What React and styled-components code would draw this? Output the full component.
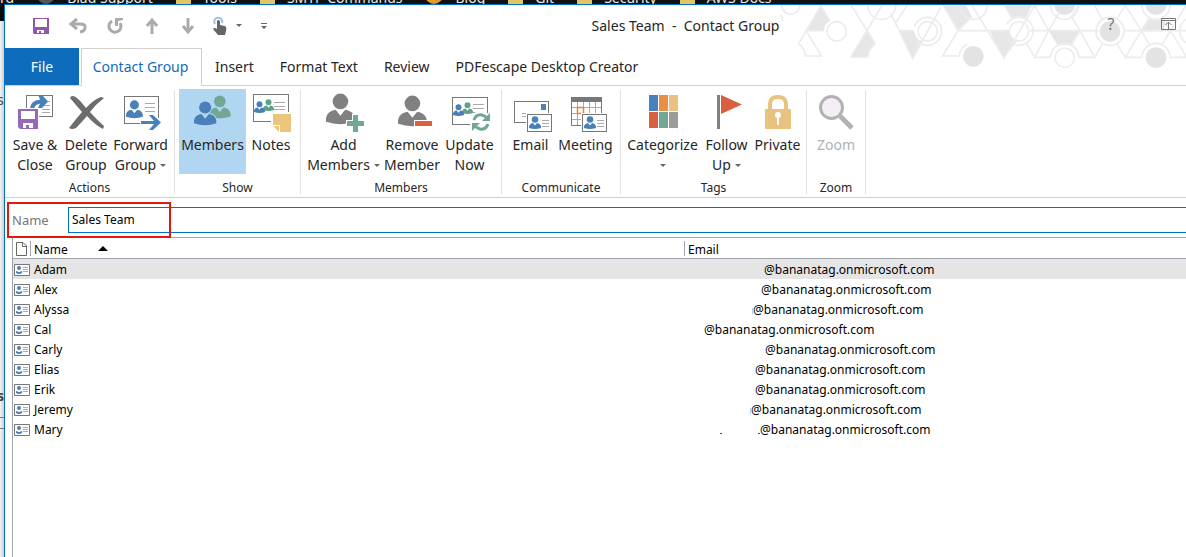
import React from "react";
import styled, { createGlobalStyle } from "styled-components";

const blue = "#4a80b9";
const green = "#72a793";
const accent = "#0f6cbd";
const grey = "#6d6d6d";

const GlobalStyle = createGlobalStyle`
  * { box-sizing: border-box; }
  body {
    margin: 0;
    background: #fff;
    color: #262626;
    font: 14px/20px "Noto Sans", "Open Sans", sans-serif;
  }
  button, input { font: inherit; color: inherit; }
  svg { display: block; overflow: visible; }
`;

const Page = styled.div`
  min-height: 100vh;
  display: flex;
  flex-direction: column;
`;

/* Browser bookmarks bar behind the window */
const Bookmarks = styled.div`
  height: 4px;
  overflow: hidden;
  display: flex;
  align-items: flex-end;
  gap: 23px;
  background: #111;
  color: #e8e8e8;
  white-space: nowrap;
`;
const Bookmark = styled.span`
  display: flex;
  align-items: flex-end;
  gap: 12px;
  line-height: 20px;
  margin-bottom: -4px;
`;
const Folder = styled.i`
  width: 15px;
  height: 14px;
  margin-bottom: 4px;
  background: #e3c566;
`;
const RoundIcon = styled.i`
  width: 18px;
  height: 18px;
  margin-bottom: 4px;
  border-radius: 9px;
  border: 4px solid ${(p) => p.$color};
  background: #222;
`;

const Desktop = styled.div`
  flex: 1;
  display: flex;
`;
const Behind = styled.div`
  width: 4px;
  overflow: hidden;
  display: flex;
  flex-direction: column;
  background: linear-gradient(to right, #f4f4f4, #cfcfcf);
  color: #444;
`;
const BehindTop = styled.div`
  height: 17px;
  background: #0a0a0a;
`;
const BehindText = styled.span`
  margin-top: ${(p) => p.$gap}px;
  margin-left: -3px;
  line-height: 20px;
  font-weight: ${(p) => (p.$bold ? 700 : 400)};
`;
const BehindBox = styled.i`
  margin-top: 11px;
  height: 12px;
  border: 1px solid #777;
  border-left: 0;
  border-right: 0;
`;
const Window = styled.main`
  flex: 1;
  min-width: 0;
  display: flex;
  flex-direction: column;
  background: #fff;
  border: 0 solid #0072c6;
  border-width: 1px 0 0 1px;
`;

const Header = styled.header`
  position: relative;
`;
const Pattern = styled.svg`
  position: absolute;
  top: 0;
  right: 0;
  width: 406px;
  height: 68px;
  overflow: hidden;
  fill: none;
  stroke: #ececec;
  stroke-width: 5;
`;
const TitleBar = styled.div`
  position: relative;
  height: 43px;
  padding-bottom: 2px;
  display: flex;
  align-items: center;
`;
const QuickAccess = styled.div`
  width: 275px;
  padding-left: 18px;
  display: flex;
`;
const IconButton = styled.button`
  width: ${(p) => p.$width || 37}px;
  height: 30px;
  padding: 0;
  border: 0;
  background: none;
  display: flex;
  align-items: center;
  justify-content: center;
  gap: 9px;
  color: #777;
`;
const Title = styled.h1`
  flex: 1;
  margin: 0;
  font-size: 14px;
  font-weight: 400;
  text-align: center;
  white-space: pre;
`;
const WindowControls = styled.div`
  width: 95px;
  padding-bottom: 3px;
  display: flex;
  justify-content: space-between;
  font-size: 16px;
`;

const TabBar = styled.nav`
  position: relative;
  height: 38px;
  display: flex;
  border-bottom: 1px solid #d0d0d0;
`;
const Tab = styled.button`
  height: 37px;
  padding: 0 13px;
  border: 0;
  background: none;
  white-space: nowrap;
`;
const FileTab = styled(Tab)`
  width: 74px;
  margin-right: 2px;
  background: ${accent};
  color: #fff;
`;
const ActiveTab = styled(Tab)`
  height: 38px;
  width: 121px;
  padding: 0 2px 2px 0;
  border: 1px solid #d0d0d0;
  border-bottom: 0;
  background: #fff;
  color: ${accent};
`;

const Ribbon = styled.div`
  height: 112px;
  display: flex;
  border-bottom: 1px solid #d0d0d0;
`;
const Group = styled.section`
  padding: 3px 4px 0;
`;
const GroupButtons = styled.div`
  height: 85px;
  display: flex;
`;
const GroupLabel = styled.h2`
  margin: 4px 0 0;
  font-size: 12px;
  line-height: 20px;
  font-weight: 400;
  text-align: center;
`;
const Divider = styled.i`
  width: 1px;
  margin: 4px 0 3px;
  background: #e1e1e1;
`;
const Command = styled.button`
  width: ${(p) => p.$width}px;
  padding: 3px 0 0;
  border: 0;
  background: ${(p) => (p.$active ? "#b1d6f2" : "none")};
  color: ${(p) => (p.disabled ? "#b1b1b1" : "#262626")};
  display: flex;
  flex-direction: column;
  align-items: center;
  white-space: nowrap;
`;
const CommandIcon = styled.svg`
  width: 40px;
  height: 40px;
  flex: none;
  margin-bottom: 3px;
  fill: none;
`;
const CommandLine = styled.span`
  height: 20px;
  flex: none;
  display: flex;
  align-items: center;
  gap: 4px;
`;

const NameForm = styled.form`
  position: relative;
  height: 39px;
  padding: 9px 0 4px 7px;
  display: flex;
`;
const NameLabel = styled.label`
  width: 56px;
  line-height: 26px;
  font-size: 13px;
  color: #767676;
`;
const NameInput = styled.input`
  flex: 1;
  min-width: 0;
  height: 26px;
  padding: 0 3px 2px;
  border: 1px solid #0072c6;
  border-right: 0;
  border-radius: 0;
  outline: 0;
  background: #fff;
  color: #000;
  font-size: 12px;
`;
const Highlight = styled.div`
  position: absolute;
  top: 4px;
  left: 2px;
  width: 164px;
  height: 36px;
  border: 2px solid #e3170d;
  pointer-events: none;
`;

const ListPane = styled.div`
  flex: 1;
  margin-left: 7px;
  border: 0 solid #a0a4ae;
  border-width: 1px 0 0 1px;
`;
const Table = styled.table`
  width: 100%;
  table-layout: fixed;
  border-collapse: collapse;
  font-size: 12px;
  color: #000;
  th, td {
    height: 20px;
    padding: 0;
    text-align: left;
    font-weight: 400;
    white-space: nowrap;
  }
  td {
    padding-top: 2px;
    line-height: 18px;
  }
`;
const HeadRow = styled.tr`
  border-bottom: 1px solid #a0a4ae;
`;
const HeadCell = styled.div`
  height: 20px;
  display: flex;
  align-items: center;
  padding-left: ${(p) => (p.$icon ? 3 : 0)}px;
  padding-top: 1px;
`;
const HeadText = styled.span`
  padding: 3px 30px 0 3px;
`;
const HeadRule = styled.i`
  width: 1px;
  height: 15px;
  background: #a0a4ae;
`;
const Row = styled.tr`
  background: ${(p) => (p.$selected ? "#e5e5e5" : "#fff")};
`;
const Cell = styled.td`
  && { padding-left: ${(p) => p.$indent}px; }
`;
const LocalPart = styled.span`
  display: inline-flex;
  justify-content: flex-end;
  align-items: center;
  gap: 36px;
  width: ${(p) => p.$width}px;
`;
const EdgeSpeck = styled.i`
  width: 1px;
  height: 6px;
  background: #a8d8ee;
`;
const DotSpeck = styled.i`
  width: 2px;
  height: 1px;
  margin-bottom: 4px;
  background: #555;
`;

const Caret = () => (
  <svg width="6" height="3" viewBox="0 0 6 3"><path d="M0 0H6L3 3Z" fill="#666" /></svg>
);

/* Head and shoulders; s scales around a 24 by 26 figure */
const Person = ({ x, y, s = 1, color, outline }) => (
  <g transform={`translate(${x} ${y}) scale(${s})`}>
    <path
      d="M0 24V21Q1 15 8 14L12 19L16 14Q23 15 24 21V24Q12 28 0 24Z"
      fill={color} stroke={outline} strokeWidth={outline ? 2 : 0} paintOrder="stroke"
    />
    <circle cx="12" cy="7" r="6.5" fill={color} stroke={outline} strokeWidth={outline ? 2 : 0} paintOrder="stroke" />
  </g>
);
const Card = ({ x, y, w, h }) => (
  <rect x={x + 0.5} y={y + 0.5} width={w - 1} height={h - 1} fill="#fff" stroke="#777" />
);
const Lines = ({ x, w, ys }) => (
  <path d={ys.map((y) => `M${x} ${y}.5h${w}`).join("")} stroke="#aaa" />
);
const MiniCard = () => (
  <>
    <path d="M15 21H42V41H15Z" fill="#fff" />
    <Card x={16} y={22} w={25} h={18} />
    <Person x={18} y={24} s={0.5} color={blue} />
    <Lines x={31} w={7} ys={[28, 31, 34]} />
  </>
);

const icons = {
  save: (
    <>
      <Card x={11} y={3} w={27} h={22} />
      <Lines x={27} w={8} ys={[9, 13, 17, 20]} />
      <path d="M16 20Q15 10 26 9" stroke="#fff" strokeWidth="7" />
      <path d="M17 18Q17 9.500 27 9.500" stroke={blue} strokeWidth="4" />
      <path d="M23 3H27L33 9.500L27 16H23L26 9.500Z" fill={blue} />
      <path d="M2 16H24V38H2Z" fill="#fff" />
      <path d="M3 17H23V37H5L3 35Z" fill="#9668b9" />
      <path d="M6 19H20V27H6ZM8 31H18V36H14V33H11V36H8Z" fill="#fff" />
    </>
  ),
  delete: (
    <path
      d="M4 6Q5 3 9 4.500Q14 8 20 16Q27 8 35 5L38 6Q30 12 24 20Q31 28 38 34L37 37Q29 33 21 24Q15 31 10 36Q6 38 3 36Q9 28 16 20Q9 12 4 6Z"
      fill={grey}
    />
  ),
  forward: (
    <>
      <Card x={3} y={4} w={35} h={28} />
      <Person x={5} y={8} s={0.7} color={blue} />
      <Lines x={24} w={10} ys={[11, 15, 19]} />
      <path d="M19 31H36M28 23L38 31L28 39" stroke="#fff" strokeWidth="7" />
      <path d="M20 29H33L28 23H32L40 30.500L32 38H28L33 32H20Z" fill={blue} />
    </>
  ),
  members: (
    <>
      <Person x={16} y={3} s={0.9} color={green} />
      <Person x={1} y={9} s={0.93} color={blue} outline="#b1d6f2" />
    </>
  ),
  notes: (
    <>
      <Card x={2} y={2} w={36} h={28} />
      <Person x={12} y={7} s={0.46} color="#5fa088" />
      <Person x={3} y={9} s={0.46} color={blue} />
      <Lines x={23} w={11} ys={[10, 14, 17]} />
      <path d="M20 20H41V41H20Z" fill="#fff" />
      <path d="M22 22H40V40H29V33H22Z" fill="#ecc57c" />
      <path d="M22 34H28V40Z" fill="#ecc57c" />
    </>
  ),
  add: (
    <>
      <Person x={2} y={1} s={1.2} color="#808080" />
      <path d="M28 22H35V28H41V35H35V41H28V35H22V28H28Z" fill="#fff" />
      <path d="M29 23H34V29H40V34H34V40H29V34H23V29H29Z" fill={green} />
    </>
  ),
  remove: (
    <>
      <Person x={6} y={3} s={1.2} color="#808080" />
      <path d="M22 28H41V35H22Z" fill="#fff" />
      <path d="M23 29H40V34H23Z" fill="#dc6141" />
    </>
  ),
  update: (
    <>
      <Card x={2} y={5} w={36} h={28} />
      <Person x={12} y={10} s={0.46} color="#5fa088" />
      <Person x={3} y={12} s={0.46} color={blue} />
      <Lines x={23} w={11} ys={[12, 16, 20]} />
      <circle cx="31" cy="30" r="11" fill="#fff" />
      <path d="M24 28Q26 22 32 23Q35 24 37 26M38 32Q36 38 30 37Q27 36 25 34" stroke={green} strokeWidth="3" />
      <path d="M40 21V29H32ZM22 39V31H30Z" fill={green} />
    </>
  ),
  email: (
    <>
      <Card x={3} y={9} w={35} h={22} />
      <path d="M30 12H35V18H30Z" fill={blue} />
      <Lines x={11} w={4} ys={[21, 24]} />
      <MiniCard />
    </>
  ),
  meeting: (
    <>
      <path d="M5.500 9V33.500H35.500V9M11.500 10V33M17.500 10V33M23.500 10V33M29.500 10V33M6 15.500H35M6 21.500H35M6 27.500H35" stroke="#aaa" />
      <path d="M5.500 9V33.500H35.500V9" stroke="#777" />
      <path d="M5 5H36V10H5Z" fill="#777" />
      <path d="M11.500 15.500H17.500V21.500H11.500Z" stroke="#e88234" strokeWidth="1.500" fill="#fff" />
      <MiniCard />
    </>
  ),
  categorize: (
    <>
      <path d="M6 3H15V19H6Z" fill="#4a80bb" />
      <path d="M16 3H25V19H16Z" fill="#e88f46" />
      <path d="M26 3H35V19H26Z" fill="#e9c27f" />
      <path d="M6 20H15V36H6Z" fill="#d86042" />
      <path d="M16 20H25V36H16Z" fill="#74a896" />
      <path d="M26 20H35V36H26Z" fill="#9b9b9b" />
    </>
  ),
  follow: (
    <>
      <path d="M10 3H13V37H10Z" fill="#808080" />
      <path d="M14 3L35 12.500L14 22Z" fill="#d9603f" />
    </>
  ),
  private: (
    <>
      <path d="M12 18V12Q12 5 20 5T28 12V18" stroke="#e9c27f" strokeWidth="4" />
      <rect x="7" y="17" width="26" height="20" rx="1" fill="#e9c27f" />
      <circle cx="20" cy="23" r="3" fill="#fff" />
      <path d="M19 23H21V33H19Z" fill="#fff" />
    </>
  ),
  zoom: (
    <>
      <path d="M24 24L36 36" stroke="#b2b2b2" strokeWidth="5" />
      <circle cx="15.500" cy="15.500" r="11" fill="#f3eff5" stroke="#b2b2b2" strokeWidth="3" />
    </>
  ),
};

const groups = [
  { label: "Actions", commands: [
    { icon: "save", width: 52, lines: ["Save &", "Close"] },
    { icon: "delete", width: 50, lines: ["Delete", "Group"] },
    { icon: "forward", width: 59, lines: ["Forward", "Group"], menu: true },
  ] },
  { label: "Show", commands: [
    { icon: "members", width: 67, lines: ["Members"], active: true },
    { icon: "notes", width: 50, lines: ["Notes"] },
  ] },
  { label: "Members", commands: [
    { icon: "add", width: 77, lines: ["Add", "Members"], menu: true },
    { icon: "remove", width: 60, lines: ["Remove", "Member"] },
    { icon: "update", width: 55, lines: ["Update", "Now"] },
  ] },
  { label: "Communicate", commands: [
    { icon: "email", width: 49, lines: ["Email"] },
    { icon: "meeting", width: 61, lines: ["Meeting"] },
  ] },
  { label: "Tags", commands: [
    { icon: "categorize", width: 75, lines: ["Categorize", ""], menu: true },
    { icon: "follow", width: 53, lines: ["Follow", "Up"], menu: true },
    { icon: "private", width: 49, lines: ["Private"] },
  ] },
  { label: "Zoom", commands: [{ icon: "zoom", width: 50, lines: ["Zoom"], disabled: true }] },
];

/* hidden: width of the blanked-out local part of each address */
const members = [
  { name: "Adam", hidden: 76 },
  { name: "Alex", hidden: 73 },
  { name: "Alyssa", hidden: 65, edge: true },
  { name: "Cal", hidden: 16 },
  { name: "Carly", hidden: 77 },
  { name: "Elias", hidden: 67 },
  { name: "Erik", hidden: 67 },
  { name: "Jeremy", hidden: 63, edge: true },
  { name: "Mary", hidden: 72, dots: true },
];

const HeaderPattern = () => (
  <Pattern viewBox="0 15 1218 204" aria-hidden="true">
    <path fill="#e6e6e6" stroke="none" d="M122 18L150 62Q130 74 132 92H78ZM261 92L286 132Q266 142 264 171H213ZM356 92H402Q406 118 427 124L398 176ZM490 16H558L576 50L534 92ZM674 16H756L738 54Q716 44 698 58ZM628 92H686Q690 120 712 122L672 174ZM806 92H900L872 138Q852 130 834 138ZM1110 56Q1128 64 1146 54L1158 72Q1150 82 1150 94H1084Z" />
    <path d="M0 44Q12 62 6 64M56 132L122 18L150 62M56 132Q76 146 76 168H124L78 92H132M214 16L286 132M213 171L306 16M213 171H264M264 171Q266 144 286 132M332 40L398 176L482 22M346 70L382 16M356 92H402M490 16L534 92L488 168H540M534 92L576 50M534 92H628M576 16L672 174L764 16M674 16L698 58M686 92H628M750 92H806L764 172L738 128M764 172H812M764 16L806 92H958M806 92L850 16M900 92L944 172L968 130M900 92L872 138M896 172H944M900 92L874 50L896 16M944 16L966 60M1010 130L1036 172L1084 92L1036 16L1010 58M1030 92H1218M1036 172H1084M1084 92L1108 134M1084 92L1110 50M1146 134L1218 16M1146 50L1218 168M1168 172H1218" />
    <circle cx="32" cy="16" r="27" />
    <circle cx="170" cy="94" r="29" />
    <circle cx="305" cy="16" r="42" />
    <circle cx="443" cy="94" r="29" />
    <path d="M403 80a42 42 0 1 1 10 44" />
    <path d="M538 16a42 42 0 0 0 84 0" />
    <circle cx="717" cy="94" r="29" />
    <path d="M680 74a42 42 0 1 1 2 42" />
    <path d="M812 16a42 42 0 0 0 84 0M812 172a42 42 0 0 1 84 0" />
    <circle cx="854" cy="173" r="29" />
    <circle cx="990" cy="94" r="42" />
    <path d="M538 168a42 42 0 0 1 24-36M1086 16a42 42 0 0 0 84 0M1086 172a42 42 0 0 1 84 0M1218 58a42 42 0 0 0 0 70" />
    <g fill="#e3e3e3" stroke="none">
      <circle cx="580" cy="169" r="31" />
      <circle cx="990" cy="94" r="31" />
      <circle cx="1128" cy="173" r="31" />
      <path d="M823 15a31 30 0 0 0 62 0ZM1097 15a31 30 0 0 0 62 0Z" />
    </g>
  </Pattern>
);

const QuickIcons = () => (
  <QuickAccess>
    <IconButton aria-label="Save">
      <svg width="16" height="16" viewBox="0 0 16 16">
        <path d="M0 0H16V16H1L0 15Z" fill="#8e57ab" />
        <path d="M2 1H14V9H2ZM4 12H11V15H8V13H6V15H4Z" fill="#fff" />
      </svg>
    </IconButton>
    <IconButton aria-label="Undo">
      <svg width="18" height="16" viewBox="0 0 18 16" fill="none" stroke="#aaa" strokeWidth="3">
        <path d="M3 6H11Q17 6 16 10Q16 13 11 14" /><path d="M8 1L2 6L8 11" />
      </svg>
    </IconButton>
    <IconButton aria-label="Repeat">
      <svg width="16" height="16" viewBox="0 0 16 16" fill="none" stroke="#aaa" strokeWidth="3">
        <path d="M5 3A6 6 0 1 0 13 5" /><path d="M8 0H16V2L11 3V8H8Z" fill="#aaa" stroke="none" />
      </svg>
    </IconButton>
    <IconButton aria-label="Previous item">
      <svg width="12" height="16" viewBox="0 0 12 16" fill="none" stroke="#aaa" strokeWidth="3">
        <path d="M6 16V3" /><path d="M1 8L6 2L11 8" />
      </svg>
    </IconButton>
    <IconButton aria-label="Next item">
      <svg width="12" height="16" viewBox="0 0 12 16" fill="none" stroke="#aaa" strokeWidth="3">
        <path d="M6 0V13" /><path d="M1 8L6 14L11 8" />
      </svg>
    </IconButton>
    <IconButton aria-label="Touch mode" $width={42}>
      <svg width="14" height="18" viewBox="0 0 14 18">
        <path d="M2 7A4 4 0 1 1 9 6" fill="none" stroke="#9dbfe0" strokeWidth="2" />
        <path d="M4 4Q5 2 7 4V8L12 9Q14 10 13 14L12 18H5L0 12Q1 10 4 12Z" fill="#666" />
      </svg>
      <Caret />
    </IconButton>
    <IconButton aria-label="Customize toolbar" $width={32}>
      <svg width="6" height="6" viewBox="0 0 6 6"><path d="M0 0H6V1H0ZM0 3H6L3 6Z" fill="#666" /></svg>
    </IconButton>
  </QuickAccess>
);

export default function App() {
  return (
    <Page>
      <GlobalStyle />
      <Bookmarks aria-hidden="true">
        <Bookmark>rd</Bookmark>
        <Bookmark><RoundIcon $color="#555" />Blad Support</Bookmark>
        <Bookmark><Folder />Tools</Bookmark>
        <Bookmark><Folder />SMTP Commands</Bookmark>
        <Bookmark><RoundIcon $color="#e39a2d" />Blog</Bookmark>
        <Bookmark><Folder />Git</Bookmark>
        <Bookmark><Folder />Security</Bookmark>
        <Bookmark><Folder />AWS Docs</Bookmark>
      </Bookmarks>
      <Desktop>
        <Behind aria-hidden="true">
          <BehindTop />
          <BehindText $gap={69}>s</BehindText>
          <BehindText $gap={276} $bold>s</BehindText>
          <BehindBox />
        </Behind>
        <Window>
          <Header>
            <HeaderPattern />
            <TitleBar>
              <QuickIcons />
              <Title>{"Sales Team  -  Contact Group"}</Title>
              <WindowControls>
                <IconButton $width={40} aria-label="Help">?</IconButton>
                <IconButton $width={36} aria-label="Ribbon display options">
                  <svg width="15" height="12" viewBox="0 0 15 12" fill="none" stroke="#777">
                    <path d="M.5 .5H14.500V11.500H.5ZM1 2.500H14M7.500 11V4M4.500 7L7.500 4L10.500 7" />
                  </svg>
                </IconButton>
              </WindowControls>
            </TitleBar>
            <TabBar>
              <FileTab>File</FileTab>
              <ActiveTab>Contact Group</ActiveTab>
              <Tab>Insert</Tab>
              <Tab>Format Text</Tab>
              <Tab>Review</Tab>
              <Tab>PDFescape Desktop Creator</Tab>
            </TabBar>
          </Header>
          <Ribbon>
            {groups.map((group) => (
              <React.Fragment key={group.label}>
                <Group>
                  <GroupButtons>
                    {group.commands.map((c) => (
                      <Command key={c.icon} $width={c.width} $active={c.active} disabled={c.disabled}>
                        <CommandIcon viewBox="0 0 40 40">{icons[c.icon]}</CommandIcon>
                        {c.lines.map((line, i) => (
                          <CommandLine key={i}>
                            {line}
                            {c.menu && i === 1 && <Caret />}
                          </CommandLine>
                        ))}
                      </Command>
                    ))}
                  </GroupButtons>
                  <GroupLabel>{group.label}</GroupLabel>
                </Group>
                <Divider />
              </React.Fragment>
            ))}
          </Ribbon>
          <NameForm onSubmit={(e) => e.preventDefault()}>
            <NameLabel htmlFor="group-name">Name</NameLabel>
            <NameInput id="group-name" defaultValue="Sales Team" />
            <Highlight />
          </NameForm>
          <ListPane>
            <Table>
              <colgroup>
                <col width="17" />
                <col width="654" />
                <col />
              </colgroup>
              <thead>
                <HeadRow>
                  <th>
                    <HeadCell $icon>
                      <svg width="11" height="14" viewBox="0 0 11 14" fill="#fff" stroke="#666" role="img" aria-label="Type">
                        <path d="M.5 .5H7L10.500 4V13.500H.5ZM6.500 .5V4.500H10.500" />
                      </svg>
                    </HeadCell>
                  </th>
                  <th>
                    <HeadCell>
                      <HeadRule />
                      <HeadText>Name</HeadText>
                      <svg width="10" height="5" viewBox="0 0 10 5"><path d="M5 0L10 5H0Z" fill="#000" /></svg>
                    </HeadCell>
                  </th>
                  <th>
                    <HeadCell>
                      <HeadRule />
                      <HeadText>Email</HeadText>
                    </HeadCell>
                  </th>
                </HeadRow>
              </thead>
              <tbody>
                {members.map((m, i) => (
                  <Row key={m.name} $selected={i === 0}>
                    <Cell $indent={1}>
                      <svg width="16" height="12" viewBox="0 0 16 12">
                        <path d="M.5 .5H15.500V11.500H.5Z" fill="#fff" stroke="#777" />
                        <circle cx="5" cy="4" r="2" fill={blue} />
                        <path d="M2 7L5 8L8 7V9Q5 11 2 9Z" fill={blue} />
                        <path d="M9 3.500H14M9 5.500H14M9 7.500H14" stroke="#aaa" />
                      </svg>
                    </Cell>
                    <Cell $indent={4}>{m.name}</Cell>
                    <Cell $indent={4}>
                      <LocalPart $width={m.hidden}>
                        {m.edge && <EdgeSpeck />}
                        {m.dots && <><DotSpeck /><DotSpeck /></>}
                      </LocalPart>
                      @bananatag.onmicrosoft.com
                    </Cell>
                  </Row>
                ))}
              </tbody>
            </Table>
          </ListPane>
        </Window>
      </Desktop>
    </Page>
  );
}
